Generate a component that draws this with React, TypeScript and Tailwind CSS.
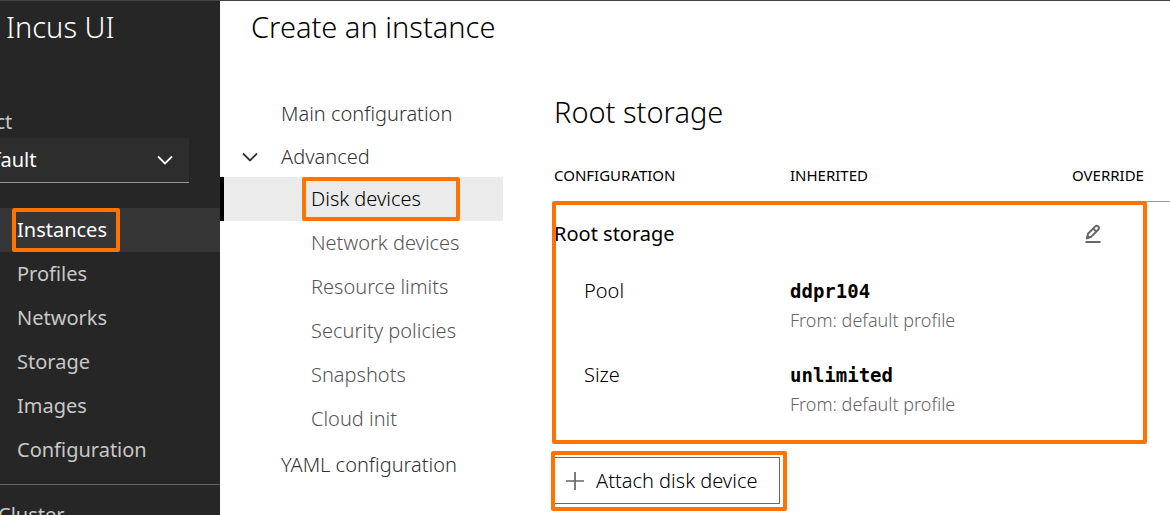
import type { ReactNode } from "react";

const sideLinks = ["Instances", "Profiles", "Networks", "Storage", "Images", "Configuration"];
const advancedLinks = [
  "Disk devices",
  "Network devices",
  "Resource limits",
  "Security policies",
  "Snapshots",
  "Cloud init",
];
const storageRows = [
  { label: "Pool", value: "ddpr104" },
  { label: "Size", value: "unlimited" },
];

function Chevron({ className }: { className: string }) {
  return (
    <svg viewBox="0 0 16 16" className={className} fill="none" stroke="currentColor" strokeWidth="1.8" aria-hidden="true">
      <path d="M1 4.5 8 11.5 15 4.5" />
    </svg>
  );
}

function PencilIcon() {
  return (
    <svg viewBox="0 0 18 20" className="h-5 w-[18px]" fill="none" stroke="#666" aria-hidden="true">
      <path d="M2.9 14.4 4 9.7 11.3 2.4Q12.7 1.2 14.2 2.5 15.6 4 14.4 5.5L7.3 12.6Z" strokeWidth="2" strokeLinejoin="round" />
      <path d="M2.3 15.2 3.3 10.8 6.8 13.4Z" fill="#666" stroke="none" />
      <path d="M9.3 4.6 12.2 7.5" strokeWidth="1.8" />
      <path d="M1.5 18H16.5" strokeWidth="2" />
    </svg>
  );
}

function Outline({ className }: { className: string }) {
  return <span aria-hidden="true" className={`pointer-events-none absolute rounded-xs border-4 border-[#ff7400] ${className}`} />;
}

function Sidebar() {
  return (
    <aside className="-ml-[60px] w-[280px] shrink-0 overflow-hidden bg-[#262626] text-[20px] text-[#c8c8c8]">
      <div className="flex h-[51px] items-center pl-[66px] text-[29px] font-light text-white">Incus UI</div>
      <div className="flex flex-col pt-[57px] pr-[31px]">
        <label htmlFor="project" className="h-[29px] pl-[7px] leading-[26px]">
          Project
        </label>
        <div className="relative">
          <select
            id="project"
            className="h-[45px] w-full appearance-none border-b border-[#999] bg-[#2d2d2d] pl-[30px] text-white"
          >
            <option>default</option>
          </select>
          <Chevron className="pointer-events-none absolute top-[14px] right-4 size-4 text-white" />
        </div>
      </div>
      <nav aria-label="Main" className="mt-[25px]">
        <ul className="border-b border-[#666] pb-3">
          {sideLinks.map((name) => (
            <li key={name}>
              <a
                href="#"
                className={`relative flex h-11 items-center pl-[77px] ${
                  name === "Instances" ? "bg-[#363636] text-white" : ""
                }`}
              >
                {name}
                {name === "Instances" && <Outline className="inset-y-0 left-[72px] w-[108px]" />}
              </a>
            </li>
          ))}
        </ul>
        <a href="#" className="block pt-[16px] pl-[58px] leading-[28px]">
          Cluster
        </a>
      </nav>
    </aside>
  );
}

function FormNav() {
  return (
    <nav aria-label="Instance form" className="w-[283px] shrink-0 pt-[40px] text-[20px] font-light text-[#333]">
      <a href="#" className="flex h-[44px] items-center pl-[61px]">
        Main configuration
      </a>
      <button type="button" className="flex h-[41px] w-full items-center pl-[22px]">
        <Chevron className="mr-[23px] size-4" />
        Advanced
      </button>
      <ul>
        {advancedLinks.map((name) => (
          <li key={name}>
            <a
              href="#"
              className={`relative flex h-11 items-center pl-[91px] ${
                name === "Disk devices" ? "bg-[#ebebeb] text-black shadow-[inset_4px_0_0_#000]" : "text-[#555]"
              }`}
            >
              {name}
              {name === "Disk devices" && <Outline className="inset-y-0 left-[82px] w-[158px]" />}
            </a>
          </li>
        ))}
      </ul>
      <a href="#" className="flex h-[47px] items-center pl-[61px]">
        YAML configuration
      </a>
    </nav>
  );
}

function HeaderCell({ children }: { children: ReactNode }) {
  return <th className="h-[52px] p-0 text-left text-[15px] font-normal uppercase">{children}</th>;
}

function StorageSection() {
  return (
    <section className="min-w-0 flex-1 pt-[39px] pl-[51px]">
      <h2 className="h-[58px] text-[29px] leading-[42px] font-light">Root storage</h2>
      <div className="relative">
        <table className="w-full table-fixed border-collapse text-[20px]">
          <colgroup>
            <col className="w-[236px]" />
            <col />
            <col className="w-[98px]" />
          </colgroup>
          <thead className="border-b border-[#999]">
            <tr>
              <HeaderCell>Configuration</HeaderCell>
              <HeaderCell>Inherited</HeaderCell>
              <HeaderCell>Override</HeaderCell>
            </tr>
          </thead>
          <tbody>
            <tr>
              <th colSpan={2} className="h-[66px] p-0 text-left font-normal">
                Root storage
              </th>
              <td className="p-0 pl-3">
                <button type="button" aria-label="Edit root storage" className="block">
                  <PencilIcon />
                </button>
              </td>
            </tr>
            {storageRows.map((row) => (
              <tr key={row.label} className="h-[84px] align-top">
                <th className="p-0 pt-[9px] pl-[30px] text-left leading-[30px] font-light">{row.label}</th>
                <td className="p-0 pt-[9px]">
                  <div className="font-['DejaVu_Sans_Mono',monospace] text-[19px] leading-[30px] font-bold">
                    {row.value}
                  </div>
                  <div className="text-[18px] leading-[28px] font-light text-[#666]">From: default profile</div>
                </td>
                <td />
              </tr>
            ))}
          </tbody>
        </table>
        <Outline className="top-[52px] right-[23px] bottom-[-9px] -left-0.5" />
      </div>
      <div className="relative mt-[22px] w-[226px]">
        <button type="button" className="flex h-[47px] w-full items-center border border-[#666] pl-[11px] text-[20px] font-light">
          <svg viewBox="0 0 18 18" className="mr-3 size-[18px]" stroke="#666" strokeWidth="1.7" aria-hidden="true">
            <path d="M9 0V18M0 9H18" />
          </svg>
          Attach disk device
        </button>
        <Outline className="-top-1.5 -right-[7px] -bottom-[7px] -left-[3px]" />
      </div>
    </section>
  );
}

export default function App() {
  return (
    <div className="flex h-screen overflow-hidden border-t border-[#444] bg-white font-['Noto_Sans',sans-serif] text-black">
      <Sidebar />
      <main className="min-w-0 flex-1">
        <h1 className="flex h-[51px] items-center pl-[31px] text-[29px] font-light">Create an instance</h1>
        <div className="flex">
          <FormNav />
          <StorageSection />
        </div>
      </main>
    </div>
  );
}
